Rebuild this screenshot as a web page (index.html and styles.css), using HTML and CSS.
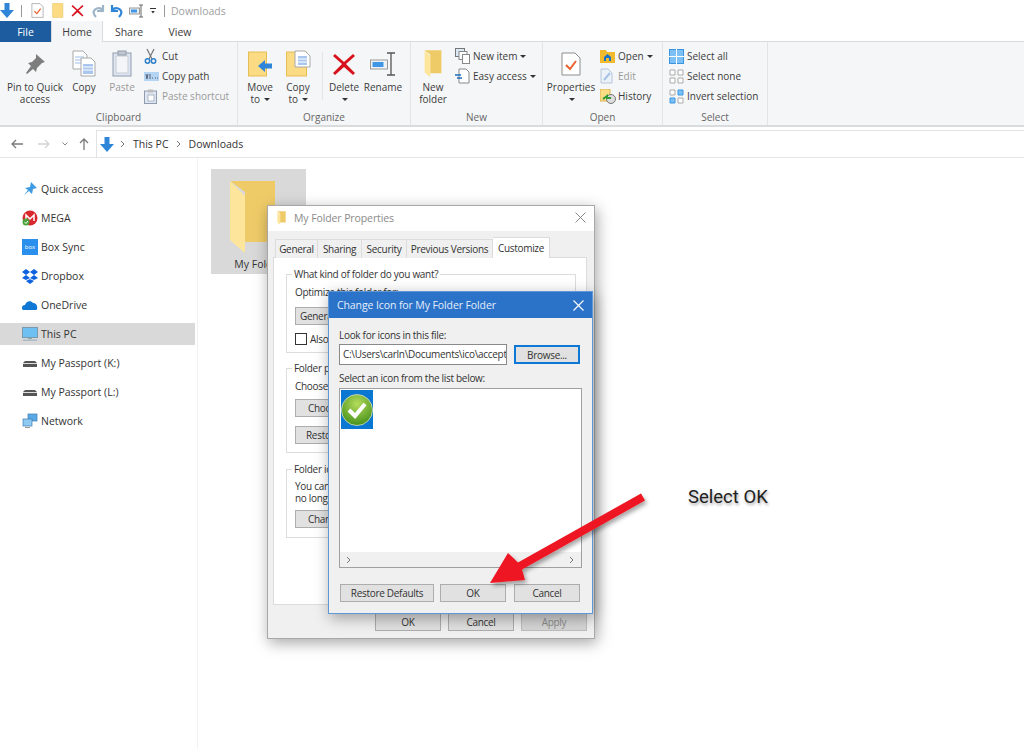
FILE: index.html
```html
<!DOCTYPE html>
<html lang="en">
<head>
  <meta charset="UTF-8">
  <title>Downloads</title>
  <link rel="stylesheet" href="styles.css">
</head>
<body>
  <svg class="defs" width="0" height="0">
    <symbol id="folder" viewBox="0 0 45 75">
      <path d="M0 1H45V62H15V12Z" fill="#efcb68"/>
      <path d="M0 1L15 16V73L0 60Z" fill="#fde69c"/>
    </symbol>
    <symbol id="flat-folder" viewBox="0 0 22 28">
      <path d="M1 1H20V27H1Z" fill="#fbdc84" stroke="#e6bd55"/>
    </symbol>
    <symbol id="down" viewBox="0 0 14 15">
      <path d="M4.500 0H9.500V7H14L7 15L0 7H4.500Z" fill="#2f86d9"/>
    </symbol>
    <symbol id="x" viewBox="0 0 24 24">
      <path d="M3 2L12 10L21 2L23 4L14 12L23 21L21 23L12 15L3 23L1 21L10 12L1 4Z" fill="#d8121d"/>
    </symbol>
    <symbol id="page-check" viewBox="0 0 20 24">
      <path d="M1 1H14L19 6V23H1Z" fill="#fff" stroke="#8d8d8d"/>
      <path d="M5 13L9 17L15 9" fill="none" stroke="#e8602c" stroke-width="2"/>
    </symbol>
    <symbol id="drive" viewBox="0 0 16 16">
      <path d="M1 8L3 6H13L15 8V12H1Z" fill="#555"/>
      <rect x="1" y="8" width="14" height="1" fill="#ddd"/>
    </symbol>
    <symbol id="chev" viewBox="0 0 6 8">
      <path d="M1 1L4 4L1 7" fill="none" stroke="#777"/>
    </symbol>
  </svg>

  <div class="explorer">
    <div class="qat">
      <svg class="qat-down" width="14" height="15"><use href="#down"/></svg>
      <span class="qat-sep"></span>
      <svg class="qat-doc" width="13" height="15"><use href="#page-check"/></svg>
      <svg class="qat-folder" width="12" height="15"><use href="#flat-folder"/></svg>
      <svg class="qat-x" width="13" height="13"><use href="#x"/></svg>
      <svg class="qat-redo" width="13" height="14" viewBox="0 0 13 14"><path d="M11 1V7H5M11 6C8 3 3 4 2 7C1 9 2 11 4 13" fill="none" stroke="#9db4c9" stroke-width="2.200"/></svg>
      <svg class="qat-undo" width="13" height="14" viewBox="0 0 13 14"><path d="M2 1V7H8M2 6C5 3 10 4 11 7C12 9 11 11 9 13" fill="none" stroke="#2f86d9" stroke-width="2.200"/></svg>
      <svg class="qat-rename" width="15" height="14" viewBox="0 0 15 14"><rect x="0.500" y="4" width="10" height="6" fill="#e8eef4" stroke="#999"/><rect x="2" y="5.500" width="6" height="3" fill="#3d96e6"/><path d="M10 1H14M10 13H14M12 1V13" stroke="#666" fill="none"/></svg>
      <span class="qat-menu"></span>
      <span class="qat-sep qat-sep-title"></span>
      <span class="qat-title">Downloads</span>
    </div>

    <div class="tabs">
      <span class="tab tab-file">File</span>
      <span class="tab tab-home">Home</span>
      <span class="tab tab-share">Share</span>
      <span class="tab tab-view">View</span>
    </div>

    <div class="ribbon">
      <section class="group group-clipboard">
        <div class="group-body">
          <div class="big big-pin">
            <span class="big-icon"><svg width="22" height="22" viewBox="0 0 22 22"><path d="M12 1L21 9L18 10L13 15L12 19L9 16L3 21L2 20L7 13L4 10L8 9L12 5Z" fill="#7d7d7d"/></svg></span>
            <span>Pin to Quick access</span>
          </div>
          <div class="big big-copy">
            <span class="big-icon"><svg width="24" height="27" viewBox="0 0 24 27"><path d="M1 1H11L15 5V19H1Z" fill="#fff" stroke="#a8a8a8"/><path d="M3 7H12M3 10H12M3 13H12" stroke="#9dbde8"/><path d="M9 8H19L23 12V26H9Z" fill="#fff" stroke="#a8a8a8"/><path d="M11 14H21V24H11Z" fill="#a9c6ee"/><path d="M11 17H21M11 20H21" stroke="#fff"/></svg></span>
            <span>Copy</span>
          </div>
          <div class="big big-paste muted">
            <span class="big-icon"><svg width="20" height="27" viewBox="0 0 20 27"><rect x="1" y="3" width="18" height="23" fill="#dfe6f1" stroke="#8f9bb0"/><rect x="4" y="6" width="12" height="17" fill="#f3f5f8" stroke="#c6ccd6"/><rect x="6" y="1" width="8" height="4" fill="#c4c9d1" stroke="#8f9bb0"/></svg></span>
            <span>Paste</span>
          </div>
          <div class="small-col">
            <div class="small"><span class="small-icon"><svg width="13" height="16" viewBox="0 0 13 16"><path d="M3 1L8 11M10 1L5 11" stroke="#777" fill="none" stroke-width="1.200"/><circle cx="3.500" cy="13" r="2.200" fill="none" stroke="#2f7fc9" stroke-width="1.500"/><circle cx="9.500" cy="13" r="2.200" fill="none" stroke="#2f7fc9" stroke-width="1.500"/></svg></span>Cut</div>
            <div class="small"><span class="small-icon"><svg width="15" height="9" viewBox="0 0 15 9"><rect width="15" height="9" fill="#b3d4f3"/><path d="M2 2L3 7L4 2M6 2V7M8 6H9M11 6H12M13 6H14" stroke="#445" fill="none" stroke-width="0.800"/></svg></span>Copy path</div>
            <div class="small muted"><span class="small-icon"><svg width="13" height="15" viewBox="0 0 13 15"><rect x="0.500" y="2" width="12" height="12.500" fill="#dfe6f1" stroke="#8f9bb0"/><rect x="4" y="0.500" width="5" height="3" fill="#bbb"/><rect x="4" y="6" width="6" height="6" fill="#fff" stroke="#8f9bb0" stroke-width="0.700"/></svg></span>Paste shortcut</div>
          </div>
        </div>
        <div class="group-label">Clipboard</div>
      </section>

      <section class="group group-organize">
        <div class="group-body">
          <div class="big big-move">
            <span class="big-icon"><svg width="25" height="26" viewBox="0 0 25 26"><rect x="0.500" y="1" width="18" height="24" fill="#fbdc84" stroke="#e6bd55"/><path d="M10 15L17 9V12.500H24V17.500H17V21Z" fill="#2f86d9"/></svg></span>
            <span>Move</span>
            <span>to <i class="caret"></i></span>
          </div>
          <div class="big big-copyto">
            <span class="big-icon"><svg width="25" height="27" viewBox="0 0 25 27"><rect x="0.500" y="2" width="20" height="24" fill="#fbdc84" stroke="#e6bd55"/><path d="M9 1H19L24 6V17H9Z" fill="#fff" stroke="#a8a8a8"/><path d="M12 6H21V15H12Z" fill="#a9c6ee"/><path d="M12 9H21M12 12H21" stroke="#fff"/></svg></span>
            <span>Copy</span>
            <span>to <i class="caret"></i></span>
          </div>
          <span class="group-sep"></span>
          <div class="big big-delete">
            <span class="big-icon"><svg width="24" height="24"><use href="#x"/></svg></span>
            <span>Delete</span>
            <span><i class="caret"></i></span>
          </div>
          <div class="big big-rename">
            <span class="big-icon"><svg width="26" height="24" viewBox="0 0 26 24"><rect x="0.500" y="8" width="17" height="9" fill="#eef2f6" stroke="#999"/><rect x="2.500" y="10" width="11" height="5" fill="#3d96e6"/><path d="M17 1H25M17 23H25M21 1V23" stroke="#555" fill="none" stroke-width="1.300"/></svg></span>
            <span>Rename</span>
          </div>
        </div>
        <div class="group-label">Organize</div>
      </section>

      <section class="group group-new">
        <div class="group-body">
          <div class="big big-newfolder">
            <span class="big-icon"><svg width="18" height="28"><use href="#folder"/></svg></span>
            <span>New</span>
            <span>folder</span>
          </div>
          <div class="small-col">
            <div class="small"><span class="small-icon"><svg width="15" height="16" viewBox="0 0 15 16"><rect x="0.500" y="0.500" width="9" height="8" fill="#dbe9f7" stroke="#777"/><rect x="4" y="3.500" width="8" height="8" fill="#fff" stroke="#888"/><rect x="7.500" y="6.500" width="7" height="9" fill="#fff" stroke="#888"/></svg></span>New item <i class="caret caret-side"></i></div>
            <div class="small"><span class="small-icon"><svg width="15" height="16" viewBox="0 0 15 16"><path d="M4 1H11L14 4V15H4Z" fill="#fff" stroke="#888"/><path d="M0 7H6M2 10H7" stroke="#1b6fc4" stroke-width="1.500"/></svg></span>Easy access <i class="caret caret-side"></i></div>
          </div>
        </div>
        <div class="group-label">New</div>
      </section>

      <section class="group group-open">
        <div class="group-body">
          <div class="big big-props">
            <span class="big-icon"><svg width="20" height="26"><use href="#page-check"/></svg></span>
            <span>Properties</span>
            <span><i class="caret"></i></span>
          </div>
          <div class="small-col">
            <div class="small"><span class="small-icon"><svg width="15" height="13" viewBox="0 0 15 13"><path d="M0 0H6L7 2H15V13H0Z" fill="#f1b92d"/><path d="M4 11V7L7.500 4L11 7V11H9V8H6V11Z" fill="#1b72c8"/></svg></span>Open <i class="caret caret-side"></i></div>
            <div class="small muted"><span class="small-icon"><svg width="13" height="16" viewBox="0 0 13 16"><path d="M1 1H8L12 5V15H1Z" fill="#edf2f9" stroke="#b5c6dc"/><path d="M4 12L10 5" stroke="#a5c2e6" stroke-width="2"/></svg></span>Edit</div>
            <div class="small"><span class="small-icon"><svg width="16" height="15" viewBox="0 0 16 15"><rect x="0" y="0" width="10" height="12" fill="#fbdc84" stroke="#d9b24c"/><circle cx="11" cy="10" r="4.500" fill="#ddd" stroke="#777"/><path d="M3 10L7 7V9H11" stroke="#2f9a37" stroke-width="2" fill="none"/></svg></span>History</div>
          </div>
        </div>
        <div class="group-label">Open</div>
      </section>

      <section class="group group-select">
        <div class="group-body">
          <div class="small-col">
            <div class="small"><span class="small-icon"><svg width="15" height="15" viewBox="0 0 15 15"><rect x="0.500" y="0.500" width="14" height="14" fill="#7cc0f5" stroke="#3b95e0"/><path d="M7.500 0V15M0 7.500H15" stroke="#fff"/></svg></span>Select all</div>
            <div class="small"><span class="small-icon"><svg width="15" height="15" viewBox="0 0 15 15"><path d="M1 1H6V6H1ZM9 1H14V6H9ZM1 9H6V14H1ZM9 9H14V14H9Z" fill="#fff" stroke="#aaa"/></svg></span>Select none</div>
            <div class="small"><span class="small-icon"><svg width="15" height="15" viewBox="0 0 15 15"><path d="M1 1H6V6H1ZM9 9H14V14H9Z" fill="#fff" stroke="#aaa"/><path d="M9 1H14V6H9ZM1 9H6V14H1Z" fill="#7cc0f5" stroke="#3b95e0"/></svg></span>Invert selection</div>
          </div>
        </div>
        <div class="group-label">Select</div>
      </section>
    </div>

    <div class="navbar">
      <svg class="nav-btn nav-back" width="12" height="10" viewBox="0 0 12 10"><path d="M12 5H1M5 1L1 5L5 9" fill="none" stroke="#7a7a7a" stroke-width="1.300"/></svg>
      <svg class="nav-btn nav-forward" width="12" height="10" viewBox="0 0 12 10"><path d="M0 5H11M7 1L11 5L7 9" fill="none" stroke="#d4d4d4" stroke-width="1.300"/></svg>
      <svg class="nav-btn nav-recent" width="6" height="4" viewBox="0 0 6 4"><path d="M0.500 0.500L3 3L5.500 0.500" fill="none" stroke="#8a8a8a"/></svg>
      <svg class="nav-btn nav-up" width="10" height="12" viewBox="0 0 10 12"><path d="M5 12V1M1 5L5 1L9 5" fill="none" stroke="#7a7a7a" stroke-width="1.300"/></svg>
      <div class="address">
        <svg class="address-icon" width="14" height="15"><use href="#down"/></svg>
        <svg class="crumb-chev" width="6" height="8"><use href="#chev"/></svg>
        <span>This PC</span>
        <svg class="crumb-chev crumb-chev-2" width="6" height="8"><use href="#chev"/></svg>
        <span>Downloads</span>
      </div>
    </div>

    <div class="main">
      <nav class="sidebar">
        <div class="side-item"><svg width="16" height="16" viewBox="0 0 16 16"><path d="M9 1L15 7L11 8L10 13L7 10L2 14L6 9L3 7L8 6Z" fill="#3f9be2"/></svg>Quick access</div>
        <div class="side-item"><svg width="16" height="16" viewBox="0 0 16 16"><circle cx="8" cy="8" r="7.500" fill="#d9272e"/><path d="M4 11V5L8 9L12 5V11" fill="none" stroke="#fff" stroke-width="1.500"/><circle cx="4" cy="12" r="3.500" fill="#4aa53c"/><path d="M2.500 12L4 13.500L6 11" fill="none" stroke="#fff"/></svg>MEGA</div>
        <div class="side-item"><span class="box-logo">box</span>Box Sync</div>
        <div class="side-item"><svg width="16" height="16" viewBox="0 0 16 16"><path d="M4 1L8 4L4 7L0 4ZM12 1L16 4L12 7L8 4ZM4 7L8 10L4 12L0 10ZM12 7L16 10L12 12L8 10ZM4 13L8 11L12 13L8 16Z" fill="#0d62e0"/></svg>Dropbox</div>
        <div class="side-item"><svg width="16" height="16" viewBox="0 0 16 16"><path d="M1 13C-1 11 0 8 3 8C4 4 9 3 11 6C14 6 16 9 15 12C15 13 14 13 13 13Z" fill="#0f78d4"/></svg>OneDrive</div>
        <div class="side-item side-item-active"><svg width="16" height="16" viewBox="0 0 16 16"><rect x="0.500" y="1.500" width="15" height="10" fill="#6fc0f2" stroke="#7a99ad"/><rect x="6" y="12" width="4" height="1" fill="#8aa"/><rect x="1" y="13.500" width="14" height="1.500" fill="#aab9c5"/></svg>This PC</div>
        <div class="side-item"><svg width="16" height="16"><use href="#drive"/></svg>My Passport (K:)</div>
        <div class="side-item"><svg width="16" height="16"><use href="#drive"/></svg>My Passport (L:)</div>
        <div class="side-item"><svg width="16" height="16" viewBox="0 0 16 16"><rect x="6" y="1" width="9" height="7" fill="#59a9e6" stroke="#3d7db3" stroke-width="0.700"/><rect x="1" y="6" width="9" height="7" fill="#8fcaf2" stroke="#3d7db3" stroke-width="0.700"/><rect x="3" y="14" width="5" height="1" fill="#999"/></svg>Network</div>
      </nav>

      <div class="files">
        <div class="file-tile">
          <svg class="file-icon" width="45" height="75"><use href="#folder"/></svg>
          <span class="file-name">My Folder</span>
        </div>
      </div>
    </div>
  </div>

  <div class="window props">
    <div class="title-bar">
      <svg width="9" height="14"><use href="#folder"/></svg>
      <span class="title-text">My Folder Properties</span>
      <svg class="title-close" width="11" height="11" viewBox="0 0 11 11"><path d="M0.500 0.500L10.500 10.500M10.500 0.500L0.500 10.500" stroke="#888"/></svg>
    </div>
    <div class="props-body">
      <div class="props-tabs">
        <span class="props-tab tab-general">General</span>
        <span class="props-tab tab-sharing">Sharing</span>
        <span class="props-tab tab-security">Security</span>
        <span class="props-tab tab-previous">Previous Versions</span>
        <span class="props-tab props-tab-active">Customize</span>
      </div>
      <div class="props-panel">
        <fieldset class="fs fs-kind">
          <legend>What kind of folder do you want?</legend>
          <p class="fs-line">Optimize this folder for:</p>
          <div class="btn fs-select">General items</div>
          <div class="check-row"><span class="checkbox"></span>Also apply this template to all subfolders</div>
        </fieldset>
        <fieldset class="fs fs-pictures">
          <legend>Folder pictures</legend>
          <p class="fs-line">Choose a file to show on this folder icon.</p>
          <div class="btn fs-btn">Choose File...</div>
          <div class="btn fs-btn fs-btn-restore">Restore Default</div>
        </fieldset>
        <fieldset class="fs fs-icons">
          <legend>Folder icons</legend>
          <p class="fs-line">You can change the folder icon. If you change it, a</p>
          <p class="fs-line">no longer show a preview of the folder's contents.</p>
          <div class="btn fs-btn fs-btn-change">Change Icon...</div>
        </fieldset>
      </div>
      <div class="button-row">
        <div class="btn dlg-btn">OK</div>
        <div class="btn dlg-btn">Cancel</div>
        <div class="btn dlg-btn btn-disabled">Apply</div>
      </div>
    </div>
  </div>

  <div class="window change-icon">
    <div class="title-bar title-bar-blue">
      <span class="title-text">Change Icon for My Folder Folder</span>
      <svg class="title-close" width="11" height="11" viewBox="0 0 11 11"><path d="M0.500 0.500L10.500 10.500M10.500 0.500L0.500 10.500" stroke="#fff" stroke-width="1.100"/></svg>
    </div>
    <div class="change-body">
      <p class="change-label">Look for icons in this file:</p>
      <div class="file-row">
        <div class="file-input">C:\Users\carln\Documents\ico\accept.ico</div>
        <div class="btn browse-btn">Browse...</div>
      </div>
      <p class="change-label list-label">Select an icon from the list below:</p>
      <div class="icon-list">
        <div class="icon-area">
          <div class="icon-tile">
            <svg width="32" height="32" viewBox="0 0 32 32">
              <defs>
                <radialGradient id="ball" cx="50%" cy="30%" r="75%">
                  <stop offset="0" stop-color="#b5dc5c"/>
                  <stop offset="1" stop-color="#3f8c16"/>
                </radialGradient>
              </defs>
              <circle cx="16" cy="16" r="15.500" fill="url(#ball)" stroke="#d5e0c8" stroke-width="0.800"/>
              <path d="M8 16L14 22L24 10" fill="none" stroke="#fff" stroke-width="4"/>
            </svg>
          </div>
        </div>
        <div class="hscroll">
          <svg width="6" height="8"><use href="#chev"/></svg>
          <svg class="hscroll-right" width="6" height="8"><use href="#chev"/></svg>
        </div>
      </div>
      <div class="change-buttons">
        <div class="btn btn-restore">Restore Defaults</div>
        <div class="btn btn-ok">OK</div>
        <div class="btn btn-cancel">Cancel</div>
      </div>
    </div>
  </div>

  <svg class="arrow" width="170" height="100" viewBox="0 0 170 100">
    <defs>
      <filter id="arrow-shadow" x="-20%" y="-20%" width="150%" height="150%">
        <feDropShadow dx="2" dy="3" stdDeviation="2" flood-color="#000" flood-opacity="0.350"/>
      </filter>
    </defs>
    <path d="M153 3.500L157 10.500L34 79.500L37 90L2 93L20 63L30 72.500Z" fill="#ed1520" filter="url(#arrow-shadow)"/>
  </svg>

  <div class="callout">Select OK</div>
</body>
</html>
```

FILE: styles.css
```css
* {
  box-sizing: border-box;
  margin: 0;
  padding: 0;
}

body {
  position: relative;
  width: 1024px;
  height: 749px;
  overflow: hidden;
  background-color: #fff;
  font-family: 'Open Sans', 'Noto Sans', sans-serif;
  font-size: 10.5px;
  color: #2b2b2b;
}

svg {
  display: block;
  flex: none;
}

.defs {
  position: absolute;
}

.muted {
  color: #9a9a9a;
}

/* title row */
.qat {
  display: flex;
  align-items: center;
  height: 21px;
}

.qat-down {
  margin-right: 7px;
}

.qat-sep {
  width: 1px;
  height: 12px;
  background-color: #999;
}

.qat-doc {
  margin-left: 9px;
}

.qat-folder {
  margin-left: 8px;
}

.qat-x {
  margin-left: 7px;
}

.qat-redo {
  margin-left: 8px;
}

.qat-undo {
  margin-left: 5px;
}

.qat-rename {
  margin-left: 6px;
}

.qat-menu {
  width: 6px;
  height: 6px;
  margin-left: 6px;
  border-top: 1px solid #333;
  background: linear-gradient(#333, #333) no-repeat center 2px / 6px 3px;
  clip-path: polygon(0 0, 100% 0, 100% 30%, 50% 100%, 0 30%);
}

.qat-sep-title {
  margin-left: 8px;
}

.qat-title {
  margin-left: 6px;
  color: #a0a0a0;
}

/* tabs */
.tabs {
  display: flex;
  height: 21px;
  border-bottom: 1px solid #dadbdc;
}

.tab {
  display: flex;
  align-items: center;
  justify-content: center;
  height: 21px;
  color: #3c3c3c;
}

.tab-file {
  width: 51px;
  background-color: #1d5c9f;
  color: #fff;
}

.tab-home {
  width: 52px;
  background-color: #f5f6f7;
  border: 1px solid #dadbdc;
  border-bottom: 0;
  border-top: 0;
}

.tab-share {
  width: 52px;
}

.tab-view {
  width: 50px;
}

/* ribbon */
.ribbon {
  display: flex;
  height: 85px;
  background-color: #f5f6f7;
  border-bottom: 2px solid #dadbdc;
  font-size: 10px;
}

.group {
  display: flex;
  flex-direction: column;
  height: 83px;
  border-right: 1px solid #e3e4e5;
}

.group-clipboard {
  width: 238px;
  padding-left: 5px;
}

.group-organize {
  width: 173px;
  padding-left: 3px;
}

.group-new {
  width: 132px;
  padding-left: 2px;
}

.group-open {
  width: 120px;
  padding-left: 3px;
}

.group-select {
  width: 105px;
  padding-left: 6px;
}

.group-body {
  display: flex;
  flex: 1;
  padding-top: 4px;
}

.group-label {
  height: 15px;
  margin-left: -6px;
  text-align: center;
  color: #666;
  line-height: 14px;
}

.group-clipboard .group-label {
  margin-left: -5px;
}

.group-organize .group-label {
  margin-left: -3px;
}

.group-new .group-label {
  margin-left: -2px;
}

.group-open .group-label {
  margin-left: -3px;
}

.group-sep {
  width: 1px;
  height: 48px;
  margin: 6px 2px 0 5px;
  background-color: #e3e4e5;
}

.big {
  display: flex;
  flex-direction: column;
  align-items: center;
  text-align: center;
  line-height: 12px;
  color: #3c3c3c;
}

.big.muted {
  color: #9a9a9a;
}

.big-icon {
  display: flex;
  align-items: center;
  justify-content: center;
  height: 35px;
}

.big-pin {
  width: 60px;
}

.big-copy,
.big-paste,
.big-move,
.big-copyto,
.big-delete {
  width: 38px;
}

.big-rename,
.big-newfolder {
  width: 40px;
}

.big-props {
  width: 50px;
}

.caret {
  display: inline-block;
  width: 0;
  height: 0;
  margin-left: 1px;
  vertical-align: 2px;
  border-left: 3px solid transparent;
  border-right: 3px solid transparent;
  border-top: 3px solid #333;
}

.caret-side {
  margin-left: 3px;
}

.small-col {
  display: flex;
  flex-direction: column;
  margin-left: 3px;
}

.group-new .small-col {
  margin-left: 2px;
}

.group-open .small-col {
  margin-left: 4px;
}

.group-select .small-col {
  margin-left: 0;
}

.small {
  display: flex;
  align-items: center;
  height: 20px;
  white-space: nowrap;
  color: #3c3c3c;
}

.small.muted {
  color: #9a9a9a;
}

.small-icon {
  display: flex;
  align-items: center;
  justify-content: flex-start;
  width: 18px;
}

/* address row */
.navbar {
  display: flex;
  align-items: center;
  height: 31px;
  padding-top: 3px;
  border-bottom: 1px solid #e6e6e6;
}

.nav-back {
  margin-left: 11px;
}

.nav-forward {
  margin-left: 15px;
}

.nav-recent {
  margin-left: 12px;
}

.nav-up {
  margin-left: 11px;
}

.address {
  display: flex;
  align-items: center;
  flex: 1;
  height: 27px;
  margin-left: 7px;
  padding-left: 3px;
  border: 1px solid #e2e2e2;
  border-right: 0;
  border-bottom: 0;
  color: #333;
}

.crumb-chev {
  margin: 0 7px 0 6px;
}

.crumb-chev-2 {
  margin: 0 7px 0 7px;
}

/* nav pane and file list */
.main {
  display: flex;
  height: 591px;
}

.sidebar {
  display: flex;
  flex-direction: column;
  gap: 7px;
  width: 198px;
  padding-top: 20px;
  border-right: 1px solid #f2f2f2;
}

.side-item {
  display: flex;
  align-items: center;
  gap: 3px;
  width: 195px;
  height: 22px;
  padding-left: 22px;
  color: #333;
}

.side-item-active {
  background-color: #d9d9d9;
}

.box-logo {
  display: flex;
  align-items: center;
  justify-content: center;
  width: 16px;
  height: 16px;
  background-color: #2b8fee;
  color: #fff;
  font-size: 6px;
}

.files {
  padding: 11px 0 0 13px;
}

.file-tile {
  display: flex;
  flex-direction: column;
  align-items: center;
  width: 95px;
  height: 105px;
  padding-top: 11px;
  background-color: #d9d9d9;
}

.file-icon {
  margin-right: 12px;
}

.file-name {
  margin-top: 2px;
  color: #333;
}

/* dialogs */
.window {
  position: absolute;
  background-color: #f0f0f0;
  box-shadow: 2px 4px 14px rgba(0, 0, 0, 0.35);
  font-size: 10px;
  letter-spacing: -0.3px;
}

.props {
  left: 267px;
  top: 205px;
  width: 328px;
  height: 434px;
  border: 1px solid #a8a8a8;
}

.title-bar {
  display: flex;
  align-items: center;
  height: 25px;
  padding-left: 9px;
  padding-bottom: 2px;
  background-color: #fff;
  color: #8a8a8a;
}

.title-text {
  margin-left: 8px;
  font-size: 10.5px;
  letter-spacing: -0.1px;
}

.title-close {
  margin-left: auto;
  margin-right: 8px;
}

.props-body {
  padding: 6px 7px 0 5px;
}

.props-tabs {
  display: flex;
  align-items: flex-end;
  height: 20px;
  padding-left: 2px;
}

.props-tab {
  display: flex;
  align-items: center;
  justify-content: center;
  height: 19px;
  margin-bottom: -1px;
  border: 1px solid #dcdcdc;
  border-left: 0;
  border-bottom: 0;
  background-color: #f0f0f0;
  color: #333;
}

.tab-general {
  width: 43px;
  border-left: 1px solid #dcdcdc;
}

.tab-sharing {
  width: 44px;
}

.tab-security {
  width: 45px;
}

.tab-previous {
  width: 86px;
}

.props-tab-active {
  position: relative;
  width: 57px;
  height: 21px;
  background-color: #fff;
}

.props-panel {
  height: 348px;
  padding: 10px 10px 0 12px;
  background-color: #fff;
  border: 1px solid #dcdcdc;
  overflow: hidden;
}

.fs {
  height: 85px;
  padding: 0 8px;
  border: 1px solid #dcdcdc;
  white-space: nowrap;
  overflow: hidden;
  color: #333;
}

.fs legend {
  margin-left: -3px;
  padding: 0 2px;
  line-height: 12px;
}

.fs-line {
  line-height: 12px;
}

.fs-kind .fs-line {
  margin-top: 6px;
}

.fs-pictures {
  height: 91px;
  margin-top: 9px;
}

.fs-pictures .fs-line {
  margin-top: 6px;
}

.fs-icons {
  height: 75px;
  margin-top: 10px;
}

.fs-icons .fs-line:first-of-type {
  margin-top: 5px;
}

.btn {
  display: flex;
  align-items: center;
  justify-content: center;
  height: 18px;
  background-color: #e1e1e1;
  border: 1px solid #adadad;
  color: #333;
}

.fs-select {
  justify-content: flex-start;
  width: 260px;
  margin-top: 9px;
  padding-left: 4px;
}

.check-row {
  display: flex;
  align-items: center;
  gap: 3px;
  margin-top: 7px;
}

.checkbox {
  width: 12px;
  height: 12px;
  background-color: #fff;
  border: 1px solid #333;
}

.fs-btn {
  justify-content: flex-start;
  width: 100px;
  margin-top: 7px;
  padding-left: 12px;
}

.fs-btn-restore {
  margin-top: 9px;
  padding-left: 10px;
}

.fs-btn-change {
  margin-top: 6px;
}

.button-row {
  display: flex;
  justify-content: flex-end;
  gap: 7px;
  margin-top: 8px;
}

.dlg-btn {
  width: 66px;
}

.btn-disabled {
  color: #8c8c8c;
  background-color: #d6d6d6;
  border-color: #bdbdbd;
}

.change-icon {
  left: 328px;
  top: 291px;
  width: 265px;
  height: 323px;
  border: 1px solid #5f98d8;
}

.title-bar-blue {
  height: 26px;
  padding-left: 0;
  padding-bottom: 0;
  background-color: #2b72c9;
  color: #e4eefa;
}

.change-body {
  padding: 11px 10px 0 10px;
}

.change-label {
  line-height: 12px;
  color: #333;
}

.file-row {
  display: flex;
  gap: 7px;
  margin-top: 3px;
}

.file-input {
  flex: none;
  width: 168px;
  height: 21px;
  padding: 0 3px;
  overflow: hidden;
  border: 1px solid #8a8a8a;
  background-color: #fff;
  color: #333;
  line-height: 19px;
  white-space: nowrap;
}

.browse-btn {
  width: 66px;
  height: 19px;
  margin-top: 1px;
  border: 2px solid #0d78d6;
}

.list-label {
  margin-top: 7px;
}

.icon-list {
  width: 243px;
  height: 180px;
  margin-top: 4px;
  border: 1px solid #a0a0a0;
  background-color: #fff;
}

.icon-area {
  height: 163px;
  padding: 1px;
}

.icon-tile {
  display: flex;
  align-items: center;
  justify-content: center;
  width: 32px;
  height: 39px;
  background-color: #0a78d2;
}

.hscroll {
  display: flex;
  align-items: center;
  height: 15px;
  padding: 0 6px;
  background-color: #f0f0f0;
}

.hscroll-right {
  margin-left: auto;
}

.change-buttons {
  display: flex;
  margin-top: 16px;
  margin-left: 1px;
}

.btn-restore {
  width: 94px;
}

.btn-ok {
  width: 66px;
  margin-left: 6px;
}

.btn-cancel {
  width: 66px;
  margin-left: 8px;
}

/* annotation */
.arrow {
  position: absolute;
  left: 488px;
  top: 490px;
  overflow: visible;
}

.callout {
  position: absolute;
  left: 688px;
  top: 487px;
  font-family: Roboto, sans-serif;
  font-size: 18.5px;
  line-height: 20px;
  color: #222;
  text-shadow: 1px 2px 3px rgba(0, 0, 0, 0.35);
}
```
